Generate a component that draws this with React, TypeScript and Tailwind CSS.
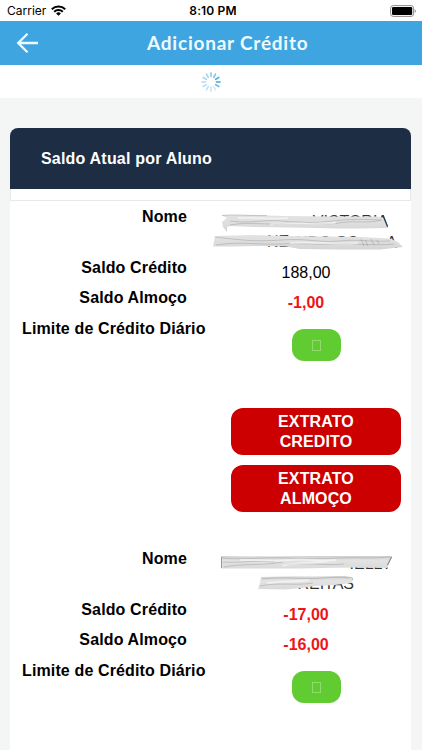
import type { ReactNode } from 'react';

type Student = {
  id: number;
  name: ReactNode;
  credit: string;
  lunch: string;
  statements: boolean;
};

function WifiIcon() {
  return (
    <svg width="15" height="11" viewBox="0 0 15 11" fill="none" stroke="#000" strokeWidth="2">
      <path d="M0.8 4.2a9.6 9.6 0 0 1 13.4 0" />
      <path d="M3.2 6.8a6.2 6.2 0 0 1 8.6 0" />
      <path d="M7.5 10.8 5.1 8.4a3.5 3.5 0 0 1 4.8 0z" fill="#000" stroke="none" />
    </svg>
  );
}

function BatteryIcon() {
  return (
    <svg width="27" height="12" viewBox="0 0 27 12">
      <rect x="0.6" y="0.6" width="23" height="10.8" rx="2.6" fill="none" stroke="#8c8c8c" />
      <rect x="2" y="2" width="20.2" height="8" rx="1.2" fill="#000" />
      <path d="M24.7 4.2c1.6.4 1.6 3.2 0 3.6z" fill="#8c8c8c" />
    </svg>
  );
}

const spokes = [0.6, 0.7, 0.9, 1, 0.75, 0.25, 0.3, 0.35, 0.35, 0.4, 0.45, 0.5];

function Spinner() {
  return (
    <svg width="20" height="20" viewBox="0 0 20 20" stroke="#45a5dc" strokeWidth="1.6" strokeLinecap="round">
      {spokes.map((opacity, i) => (
        <path key={i} d="M10 0.9v3.7" opacity={opacity} transform={`rotate(${i * 30} 10 10)`} />
      ))}
    </svg>
  );
}

function FirstName() {
  return (
    <svg width="194" height="46" viewBox="0 0 194 46" className="block">
      <defs>
        <linearGradient id="smearA" x1="0" y1="0" x2="0" y2="1">
          <stop offset="0" stopColor="#e2e2e2" />
          <stop offset="0.5" stopColor="#dedede" />
          <stop offset="1" stopColor="#d4d4d4" />
        </linearGradient>
        <filter id="soft" x="-5%" y="-30%" width="110%" height="160%">
          <feGaussianBlur stdDeviation="0.45" />
        </filter>
      </defs>
      <g fontFamily="Liberation Sans, Arial, sans-serif" fontSize="16" fill="#333">
        <text x="178" y="20.5" textAnchor="end">VICTORIA</text>
        <text x="57" y="41">NE</text>
        <text x="86" y="41.5">NDO SO</text>
        <text x="187" y="41.5" textAnchor="end">A</text>
      </g>
      <g filter="url(#soft)">
        <path d="M11 9 40 9 75 10 122 10.5 168 10.5 174 12 178 22 150 22.5 130 22.5 80 21.5 45 21 20 20 17 21 17 26 13 21 12 16 17 12z" fill="url(#smearA)" />
        <path d="M5 30 40 29 80 30 120 30.5 150 31 180 32.5 188 36 193 41 170 43.5 130 43.5 90 43 76 40.5 50 40 20 40.5 3 40.5z" fill="url(#smearA)" />
        <g fill="none" stroke="#999" strokeOpacity="0.5" strokeWidth="0.9">
          <path d="M12 9.5C28 8 38 10 57 9.5M20 15c22 3 34-2 52 0s35 2 51 0 31-2 48-1" />
          <path d="M20 19c22-4 36 1 55-2s37 3 54 0 28 1 43-3" />
          <path d="M5 31c25 3 40 5 66 3s38 3 58 1 31 1 51 0" />
          <path d="M6 39c24-4 43 0 65-1s39 1 56 0 30 2 57 0" />
        </g>
        <g fill="none" stroke="#fff" strokeOpacity="0.5" strokeWidth="1.8">
          <path d="M28 12c20-1 31 2 50 0M60 18.5c22-4 40 1 66-2" />
          <path d="M80 37c20-2 45 2 68 0" />
        </g>
      </g>
      <path d="M151 33l3 7m1-6l3 6m3-7l3 6m3-5l2 4" fill="none" stroke="#888" strokeWidth="0.6" strokeOpacity="0.7" />
      <path d="M173 9.5l4.5 11" fill="none" stroke="#333" strokeWidth="1.2" />
    </svg>
  );
}

function SecondName() {
  return (
    <svg width="194" height="46" viewBox="0 0 194 46" className="block">
      <defs>
        <linearGradient id="smearB" x1="0" y1="0" x2="0" y2="1">
          <stop offset="0" stopColor="#cfcfcf" />
          <stop offset="0.35" stopColor="#e3e3e3" />
          <stop offset="1" stopColor="#dadada" />
        </linearGradient>
      </defs>
      <g fontFamily="Liberation Sans, Arial, sans-serif" fontSize="16" fill="#333">
        <text x="182" y="20.5" textAnchor="end">IELLY</text>
        <text x="144" y="41" textAnchor="end">FREITAS</text>
      </g>
      <g filter="url(#soft)">
        <path d="M11 8 60 8.5 100 8 150 8 182 8 180 14 177 20 170 19.7 150 19.5 124 19.7 90 20.5 50 20.5 11 20.5z" fill="url(#smearB)" />
        <path d="M51 29 80 28.5 110 28.5 135 28 143 29.5 142 35 125 37 105 38 92 40 75 41.5 48 41 50 35z" fill="url(#smearB)" />
        <g fill="none" stroke="#999" strokeOpacity="0.5" strokeWidth="0.9">
          <path d="M11 10c27 2 42-1 64 0s36 1 54 0 33 1 51-1M14 19c20-4 38-1 59-5" />
          <path d="M13 14c23 1 29-2 52 0m12 3c22-3 37 1 57-1" />
          <path d="M52 31c25-3 40 1 61-1s24 1 28-1M50 38c18-4 36 0 53-3" />
        </g>
        <g fill="none" stroke="#fff" strokeOpacity="0.5" strokeWidth="1.8">
          <path d="M30 12c18-1 28 2 48 0s29 2 48 0M72 18c15-4 28-2 45-5M57 35c16-2 25-1 42-3" />
        </g>
      </g>
      <path d="M11.5 9v11" fill="none" stroke="#999" />
      <path d="M181.5 9l-4 8" fill="none" stroke="#777" />
    </svg>
  );
}

const students: Student[] = [
  { id: 1, name: <FirstName />, credit: '188,00', lunch: '-1,00', statements: true },
  { id: 2, name: <SecondName />, credit: '-17,00', lunch: '-16,00', statements: false },
];

function Value({ children }: { children: string }) {
  const negative = children.startsWith('-');
  return <span className={negative ? 'text-center font-bold text-[#ed1515]' : 'text-center'}>{children}</span>;
}

function StatementButton({ type }: { type: string }) {
  return (
    <button className="flex h-[47px] w-[170px] flex-col items-center justify-center rounded-[12px] bg-[#cc0000] text-[16px] leading-[20px] font-bold tracking-[0.13px] text-white">
      <span>EXTRATO</span>
      <span>{type}</span>
    </button>
  );
}

function StudentBalance({ student }: { student: Student }) {
  return (
    <section className="flex h-[342px] shrink-0 flex-col pt-[6px] text-[16px] leading-[20px] text-black">
      <div className="grid h-[51px] grid-cols-[177px_192px] gap-x-[23px]">
        <span className="text-right font-bold tracking-[0.13px]">Nome</span>
        <div className="-mt-px">{student.name}</div>
      </div>
      <div className="grid h-[30px] grid-cols-[177px_192px] gap-x-[23px]">
        <span className="text-right font-bold tracking-[0.13px]">Saldo Crédito</span>
        <div className="grid pt-[5px]"><Value>{student.credit}</Value></div>
      </div>
      <div className="grid h-[31px] grid-cols-[177px_192px] gap-x-[23px]">
        <span className="text-right font-bold tracking-[0.13px]">Saldo Almoço</span>
        <div className="grid pt-[5px]"><Value>{student.lunch}</Value></div>
      </div>
      <div className="flex h-[89px] pl-[12px]">
        <span className="w-[270px] font-bold tracking-[0.13px] whitespace-nowrap">Limite de Crédito Diário</span>
        <button className="mt-[10px] flex h-[32px] w-[49px] items-center justify-center rounded-[12px] bg-[#61cb32]">
          <span className="h-[11px] w-[9px] border border-[#8fdc6c]" />
        </button>
      </div>
      {student.statements ? (
        <div className="flex flex-col items-end gap-[10px] pr-[10px]">
          <StatementButton type="CREDITO" />
          <StatementButton type="ALMOÇO" />
        </div>
      ) : null}
    </section>
  );
}

export default function App() {
  return (
    <div className="flex h-[750px] w-[422px] flex-col overflow-hidden bg-[#f4f6f6] font-['Liberation_Sans',Arial,sans-serif]">
      <div className="grid h-[21px] shrink-0 grid-cols-3 items-center bg-white pr-[5px] pl-[7px] font-[Inter,sans-serif] text-[12px] leading-[20px] text-black">
        <span className="flex items-center gap-[5px]">
          Carrier
          <WifiIcon />
        </span>
        <span className="pl-[2px] text-center font-semibold tracking-[0.15px] whitespace-nowrap">8:10 PM</span>
        <span className="flex justify-end">
          <BatteryIcon />
        </span>
      </div>

      <header className="flex h-[44px] shrink-0 items-center bg-[#3fa5e1] pl-[16px] text-[#effaff]">
        <svg width="23" height="22" viewBox="0 0 23 22" fill="none" stroke="currentColor" strokeWidth="2.3">
          <path d="M22 11H2.5M11.5 1.7 2.2 11l9.3 9.3" />
        </svg>
        <h1 className="ml-[108px] font-[Lato,sans-serif] text-[19px] leading-[24px] font-bold tracking-[0.78px] whitespace-nowrap">
          Adicionar Crédito
        </h1>
      </header>

      <div className="flex h-[33px] shrink-0 items-center justify-center bg-white">
        <Spinner />
      </div>

      <main className="mt-[30px] mr-[11px] ml-[10px] flex min-h-0 flex-1 flex-col">
        <div className="flex h-[61px] shrink-0 items-center rounded-t-[8px] bg-[#1c2d44] pl-[31px]">
          <h2 className="text-[16px] leading-[20px] font-bold tracking-[0.2px] text-white">Saldo Atual por Aluno</h2>
        </div>
        <div className="h-[12px] shrink-0 border-x border-b border-[#e7e8e8] bg-white" />
        <div className="flex min-h-0 flex-1 flex-col overflow-hidden bg-white">
          {students.map((student) => (
            <StudentBalance key={student.id} student={student} />
          ))}
        </div>
      </main>
    </div>
  );
}
